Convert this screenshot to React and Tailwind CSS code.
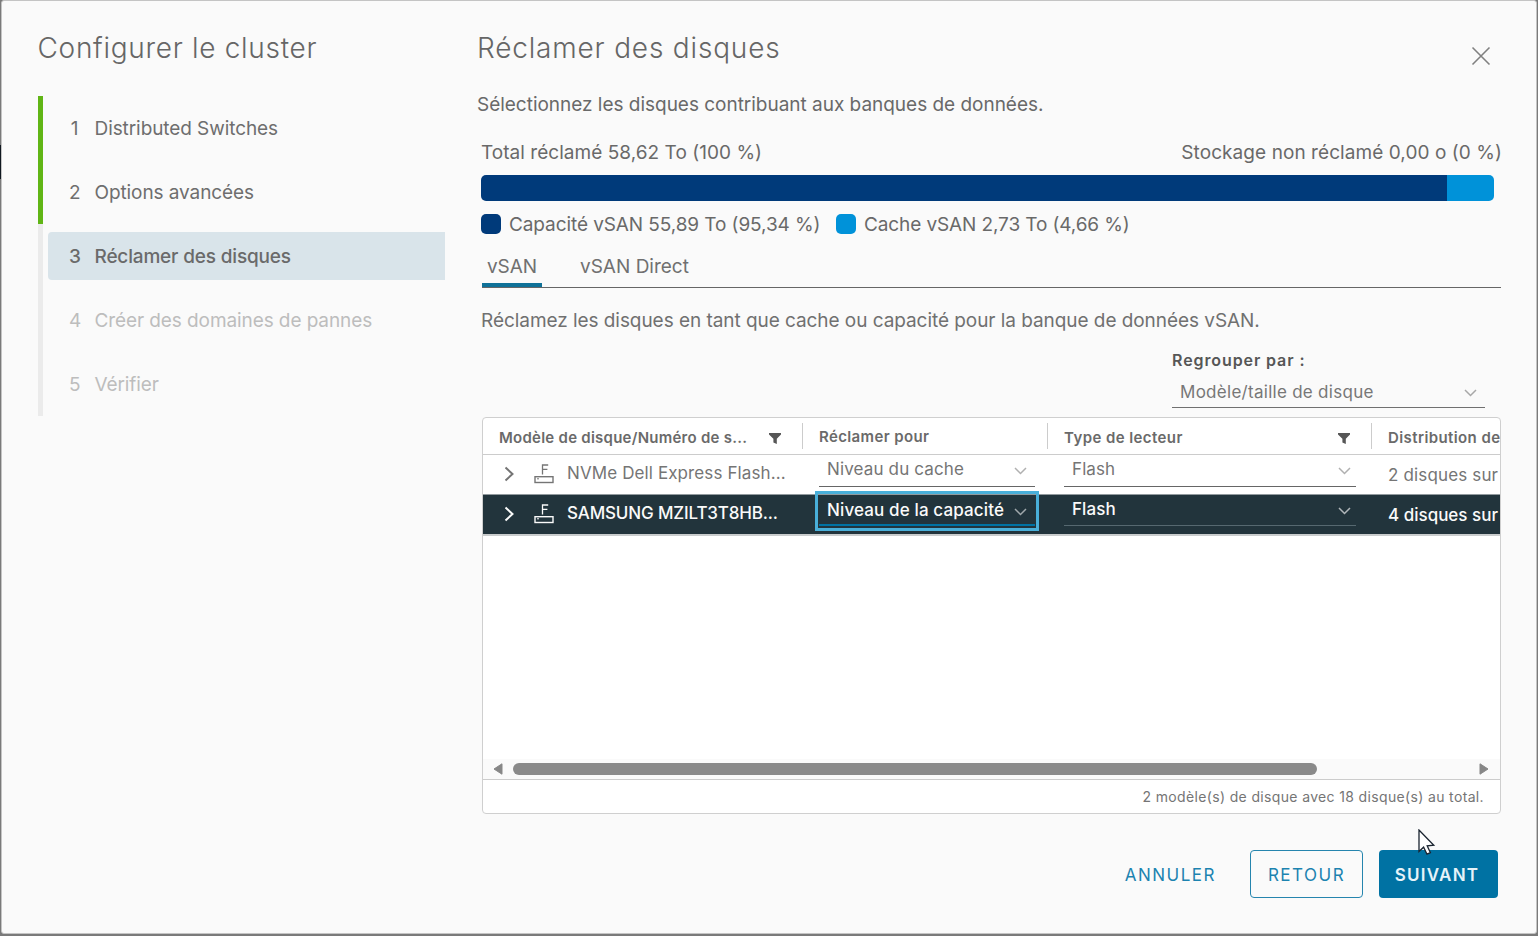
const steps = [
  { n: 1, label: "Distributed Switches", cls: "text-[#6e6e6e] tracking-[-0.08px]" },
  { n: 2, label: "Options avancées", cls: "text-[#6e6e6e] tracking-[-0.09px]" },
  { n: 3, label: "Réclamer des disques", cls: "bg-[#d9e4ea] font-medium text-[#6a6a6a] tracking-[-0.17px]" },
  { n: 4, label: "Créer des domaines de pannes", cls: "text-[#bdbdbd] tracking-[-0.09px]" },
  { n: 5, label: "Vérifier", cls: "text-[#bdbdbd] tracking-[-0.1px]" },
];

function Chevron({ className }) {
  return (
    <svg className={className} width="14" height="10" viewBox="0 0 14 10" fill="none" stroke="currentColor" strokeWidth="1.5">
      <path d="M1 2 L6.5 7.5 L12 2" />
    </svg>
  );
}

function Expand() {
  return (
    <svg className="ml-[19px] shrink-0" width="14" height="18" viewBox="0 0 14 18" fill="none" stroke="currentColor" strokeWidth="2">
      <path d="M3.5 2.5 L10.5 9 L3.5 15.5" />
    </svg>
  );
}

function FlashDisk() {
  return (
    <svg className="ml-[18px] shrink-0" width="20" height="20" viewBox="0 0 20 20" fill="none" stroke="currentColor">
      <path d="M8.5 10.5 V1 H14.2 M8.5 5.3 H13.4" strokeWidth="1.3" />
      <rect x="1" y="12.7" width="18" height="5.8" strokeWidth="1.4" />
      <path d="M3 14.8 H5" strokeWidth="1" />
    </svg>
  );
}

function Funnel({ className }) {
  return (
    <svg className={className} width="12" height="11" viewBox="0 0 12 11" fill="#565656">
      <path d="M0 0 H12 V1.6 L7.8 5.8 V11 L4.4 9.4 V5.8 L0 1.6 Z" />
    </svg>
  );
}

function Header() {
  return (
    <div className="flex h-[37px] shrink-0 border-b border-[#ccc] text-[15px] font-semibold text-[#6a6a6a]">
      <div className="flex w-[319px] shrink-0 items-center pl-4 pt-[4px]">
        <span className="w-[270px] tracking-[0.25px]">Modèle de disque/Numéro de s...</span>
        <Funnel />
      </div>
      <div className="my-[5px] w-px shrink-0 bg-[#ccc]" />
      <div className="flex w-[244px] shrink-0 items-center pl-4 pt-[3px] tracking-[0.37px]">Réclamer pour</div>
      <div className="my-[5px] w-px shrink-0 bg-[#ccc]" />
      <div className="flex w-[323px] shrink-0 items-center pl-4 pt-[4px]">
        <span className="w-[274px] tracking-[0.42px]">Type de lecteur</span>
        <Funnel />
      </div>
      <div className="my-[5px] w-px shrink-0 bg-[#ccc]" />
      <div className="flex shrink-0 items-center pl-4 pt-[4px] tracking-[0.4px]">Distribution de</div>
    </div>
  );
}

export default function App() {
  return (
    <div className="relative h-[936px] w-[1538px] overflow-hidden bg-[#7a7a7a] font-['Inter',sans-serif] text-[19px] text-[#696969]">
      <div className="absolute left-0 top-[145px] h-[34px] w-px bg-[#101820]" />
      <div className="ml-px flex h-[934px] w-[1536px] rounded-[3px] border border-[#c4c4c4] bg-[#fafafa]">
        <aside className="w-[443px] shrink-0 pl-[35.5px]">
          <h1 className="mt-[27px] h-10 text-[28px] font-light leading-10 tracking-[0.7px] text-[#666]">Configurer le cluster</h1>
          <div className="mt-[28px] flex">
            <div className="flex h-[320px] w-[5.5px] flex-col bg-[#ebebeb]">
              <div className="h-[128px] bg-[#60b515]" />
            </div>
            <ol className="ml-[5px] flex flex-1 flex-col gap-4 pt-2">
              {steps.map((s) => (
                <li key={s.n} className={"flex h-12 items-center rounded-l-[4px] pl-[21px] pt-[2px] " + s.cls}>
                  <span className="w-[11px] text-center">{s.n}</span>
                  <span className="ml-[14.5px] whitespace-nowrap">{s.label}</span>
                </li>
              ))}
            </ol>
          </div>
        </aside>

        <main className="ml-[31px] flex w-[1025px] flex-col whitespace-nowrap">
          <div className="flex justify-between">
            <h2 className="mt-[27px] h-10 pl-px text-[28px] font-light leading-10 tracking-[0.82px] text-[#666]">Réclamer des disques</h2>
            <svg className="mr-[10px] mt-[45px]" width="20" height="20" viewBox="0 0 20 20" stroke="#808080" strokeWidth="1.6">
              <path d="M1.5 1.5 L18.5 18.5 M18.5 1.5 L1.5 18.5" />
            </svg>
          </div>
          <p className="mt-[22px] h-[30px] pl-px leading-[30px] tracking-[-0.02px]">Sélectionnez les disques contribuant aux banques de données.</p>

          <div className="ml-[5px] mt-[18px] flex h-[30px] justify-between leading-[30px]">
            <span className="tracking-[0.04px]">Total réclamé 58,62 To (100 %)</span>
            <span className="-mr-px tracking-[0.07px]">Stockage non réclamé 0,00 o (0 %)</span>
          </div>
          <div className="ml-[5px] mt-[7px] flex h-[26px] w-[1013px] shrink-0 overflow-hidden rounded-[5px]">
            <div className="w-[966px] bg-[#003a7a]" />
            <div className="flex-1 bg-[#0092d9]" />
          </div>
          <div className="ml-[5px] mt-[8px] flex h-[30px] items-center">
            <span className="h-5 w-5 rounded-[5px] bg-[#003a7a]" />
            <span className="ml-[8px] w-[327px] pt-[2px] tracking-[-0.09px]">Capacité vSAN 55,89 To (95,34 %)</span>
            <span className="h-5 w-5 rounded-[5px] bg-[#0092d9]" />
            <span className="ml-[8px] pt-[2px] tracking-[-0.11px]">Cache vSAN 2,73 To (4,66 %)</span>
          </div>

          <div className="ml-[6px] mt-[11px] flex h-[38px] border-b border-[#666] text-[#707070]">
            <div className="h-[37px] w-[60px] border-b-4 border-[#0f7198] pl-[5px] leading-[33px] tracking-[-0.1px]">vSAN</div>
            <div className="ml-[38px] leading-[33px]">vSAN Direct</div>
          </div>
          <p className="ml-[5px] mt-[18px] h-[30px] leading-[30px] tracking-[-0.055px] text-[#707070]">Réclamez les disques en tant que cache ou capacité pour la banque de données vSAN.</p>

          <div className="mr-[16px] mt-[12px] w-[313px] self-end">
            <div className="h-6 text-base font-semibold leading-6 tracking-[0.9px] text-[#565656]">Regrouper par :</div>
            <div className="mt-[4px] flex h-[32px] items-center justify-between border-b border-[#707070] pl-2 pr-[7px] pt-[3px] text-[17px] tracking-[0.28px] text-[#777]">
              <span>Modèle/taille de disque</span>
              <Chevron className="text-[#a8a8a8]" />
            </div>
          </div>

          <section className="ml-[6px] mt-[9px] flex h-[397px] w-[1019px] shrink-0 flex-col overflow-hidden rounded-[4px] border border-[#cfcfcf] bg-white">
            <Header />
            <div className="flex h-[39px] shrink-0 text-[17px] text-[#757575]">
              <div className="flex w-[320px] shrink-0 items-center pb-px">
                <Expand />
                <FlashDisk />
                <span className="ml-[13px] tracking-[0.11px]">NVMe Dell Express Flash...</span>
              </div>
              <div className="ml-[16px] flex h-[32px] w-[216px] shrink-0 items-center justify-between border-b border-[#666] pb-px pl-2 pr-[7px]">
                <span className="tracking-[0.14px]">Niveau du cache</span>
                <Chevron className="mt-[2px] text-[#b0b0b0]" />
              </div>
              <div className="ml-[29px] flex h-[32px] w-[292px] shrink-0 items-center justify-between border-b border-[#666] pb-px pl-2 pr-[4px]">
                <span className="tracking-[0.1px]">Flash</span>
                <Chevron className="mt-[2px] text-[#b0b0b0]" />
              </div>
              <div className="ml-[32px] flex h-[39px] shrink-0 items-center pt-[2px] tracking-[0.15px]">2 disques sur</div>
            </div>
            <div className="flex h-[42px] shrink-0 border-b-2 border-t border-b-[#c9cccd] border-t-[#929a9e] bg-[#22343c] text-[17px] font-medium text-[#fafafa]">
              <div className="flex w-[320px] shrink-0 items-center pb-[2px]">
                <Expand />
                <FlashDisk />
                <span className="ml-[13px] tracking-[-0.15px]">SAMSUNG MZILT3T8HB...</span>
              </div>
              <div className="-mt-[4px] ml-[12px] h-[40px] w-[224px] shrink-0 border-[3px] border-[#49afd9] px-px pt-[3px]">
                <div className="flex h-[29px] items-center justify-between border-b-2 border-[#0072a3] pl-2 pr-[7px]">
                  <span className="tracking-[0.13px]">Niveau de la capacité</span>
                  <Chevron className="mt-[2px] text-[#a0a8ab]" />
                </div>
              </div>
              <div className="ml-[25px] flex h-[31px] w-[292px] shrink-0 items-center justify-between border-b border-[#566870] pl-2 pr-[4px]">
                <span className="tracking-[0.1px]">Flash</span>
                <Chevron className="mt-[2px] text-[#b0b6b9]" />
              </div>
              <div className="ml-[32px] flex shrink-0 items-center pt-[2px]">4 disques sur</div>
            </div>
            <div className="flex-1" />
            <div className="flex h-5 shrink-0 items-center bg-[#fafafa] pl-[10px] pr-[11px]">
              <svg width="10" height="12" viewBox="0 0 10 12" fill="#878787" stroke="#878787" strokeLinejoin="round"><path d="M9 0.8 V11.2 L1 6 Z" /></svg>
              <div className="ml-[10px] h-3 w-[804px] rounded-full bg-[#8a8a8a]" />
              <svg className="ml-auto" width="10" height="12" viewBox="0 0 10 12" fill="#878787" stroke="#878787" strokeLinejoin="round"><path d="M1 0.8 V11.2 L9 6 Z" /></svg>
            </div>
            <div className="flex h-[34px] shrink-0 items-center justify-end border-t border-[#ccc] pr-4 text-[14px] tracking-[0.35px] text-[#757575]">
              2 modèle(s) de disque avec 18 disque(s) au total.
            </div>
          </section>

          <footer className="mr-[3px] mt-[36px] flex h-12 shrink-0 justify-end text-[17px]">
            <button className="mr-[34px] pt-[3px] tracking-[1.5px] text-[#1c83b0]">ANNULER</button>
            <button className="mr-[16px] w-[113px] rounded-[4px] border-[1.5px] border-[#2585ae] pt-[3px] tracking-[1.5px] text-[#1c83b0]">RETOUR</button>
            <button className="w-[119px] rounded-[4px] bg-[#0072a3] pr-[3px] pt-[3px] font-semibold tracking-[1.25px] text-[#e6f3f9]">SUIVANT</button>
          </footer>
        </main>
      </div>
      <svg className="absolute left-[1418px] top-[829px]" width="18" height="28" viewBox="0 0 18 28">
        <path d="M1 1 V22.5 L5.6 18.2 L9 25.2 L12.4 23.6 L9.2 16.9 L15.8 16.2 Z" fill="#fff" stroke="#1a2430" strokeWidth="1.3" />
      </svg>
    </div>
  );
}
